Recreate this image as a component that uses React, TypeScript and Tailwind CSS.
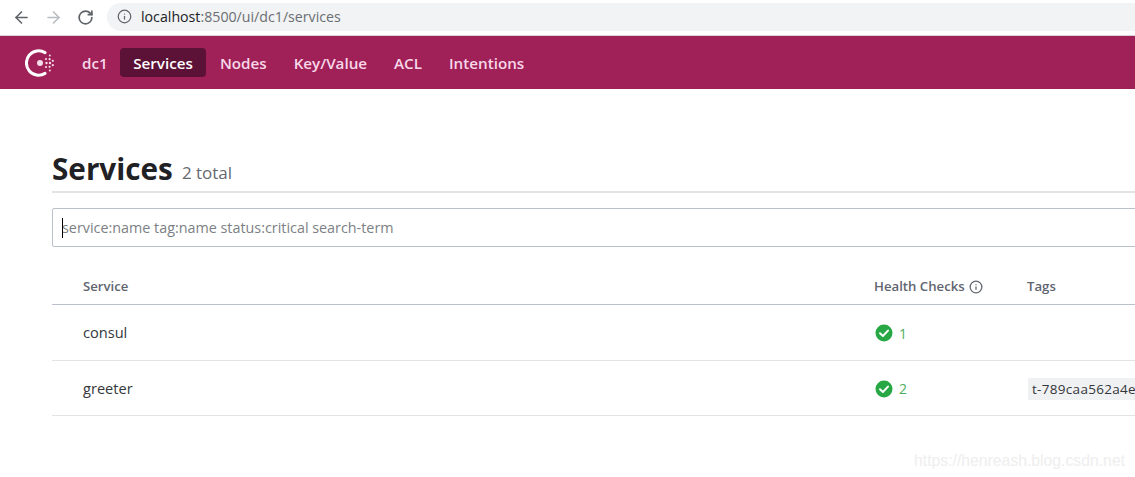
import { ArrowLeft, ArrowRight, RotateCw, Info } from 'lucide-react';

const NAV = ['Services', 'Nodes', 'Key/Value', 'ACL', 'Intentions'];

const ROWS = [
  { name: 'consul', checks: 1, tag: '' },
  { name: 'greeter', checks: 2, tag: 't-789caa562a4e2a4e2' },
];

function ConsulLogo() {
  return (
    <svg width="32" height="32" viewBox="0 0 32 32" fill="none">
      <path d="M20 5.6 A12.2 12.2 0 1 0 20 26.4" stroke="#fff" strokeWidth="3" strokeLinecap="round" />
      <circle cx="15" cy="16" r="3" fill="#f6dce8" />
      <circle cx="21.5" cy="16" r="1.2" fill="#f6dce8" />
      <circle cx="25" cy="16" r="1.2" fill="#f6dce8" />
      <circle cx="21" cy="12" r="1.1" fill="#f6dce8" />
      <circle cx="24.6" cy="12.2" r="1.1" fill="#f6dce8" />
      <circle cx="27.8" cy="13.8" r="1.1" fill="#f6dce8" />
      <circle cx="21" cy="20" r="1.1" fill="#f6dce8" />
      <circle cx="24.6" cy="19.8" r="1.1" fill="#f6dce8" />
      <circle cx="27.8" cy="18.2" r="1.1" fill="#f6dce8" />
      <circle cx="24.8" cy="8.6" r="1" fill="#f6dce8" />
      <circle cx="24.8" cy="23.4" r="1" fill="#f6dce8" />
    </svg>
  );
}

function PassIcon() {
  return (
    <svg width="18" height="18" viewBox="0 0 18 18">
      <circle cx="9" cy="9" r="8.5" fill="#28a745" />
      <path d="M5 9.3 L7.9 12 L13 6.6" stroke="#fff" strokeWidth="2" fill="none" strokeLinecap="round" strokeLinejoin="round" />
    </svg>
  );
}

export default function App() {
  return (
    <div className="relative h-[477px] w-[1135px] overflow-hidden bg-white font-['Open_Sans','Noto_Sans',sans-serif] text-[#1f2124]">
      {/* browser bar */}
      <div className="flex h-[36px] items-center border-b border-[#d9d3d6] pl-[12px]">
        <ArrowLeft size={19} strokeWidth={2} className="text-[#5f6368]" />
        <ArrowRight size={19} strokeWidth={2} className="ml-[13px] text-[#b9bcc0]" />
        <RotateCw size={17} strokeWidth={2.4} className="ml-[14px] text-[#5f6368]" />
        <div className="mb-[2px] ml-[13px] flex h-[28px] flex-1 items-center rounded-l-full bg-[#f1f3f4] pl-[10px]">
          <Info size={15} strokeWidth={2} className="text-[#5f6368]" />
          <span className="ml-[9px] text-[14.2px] text-[#6b6e72]">
            <span className="text-[#202124]">localhost</span>:8500/ui/dc1/services
          </span>
        </div>
      </div>

      {/* nav */}
      <div className="flex h-[53px] items-center bg-[#a02158] pl-[25px]">
        <ConsulLogo />
        <span className="ml-[25px] pt-[1px] text-[15.2px] font-semibold text-[#f8d8e8]">dc1</span>
        <div className="ml-[12px] flex items-center">
          {NAV.map((item, i) => (
            <span
              key={item}
              className={
                i === 0
                  ? 'rounded-[4px] bg-[#5c1137] px-[13.5px] pb-[4px] pt-[6px] text-[15.2px] font-semibold leading-[19px] text-white'
                  : 'px-[13.5px] pb-[4px] pt-[6px] text-[15.2px] font-semibold leading-[19px] text-[#f8d8e8]'
              }
            >
              {item}
            </span>
          ))}
        </div>
      </div>

      {/* content */}
      <div className="pl-[52px]">
        <div className="flex h-[104px] items-end border-b-2 border-[#e1e4e7] pb-[2px]">
          <h1 className="text-[29.7px] font-bold leading-[40px] text-[#1f2124]">Services</h1>
          <span className="mb-[3px] ml-[9px] text-[17px] leading-[26px] text-[#66696e]">2 total</span>
        </div>

        <div className="relative mt-[15px] flex h-[39px] w-[1200px] items-center rounded-[2px] border border-[#bac1cc] pl-[9px] pt-[1px] text-[14.35px] text-[#7c7f85]">
          <span className="absolute left-[9px] top-[9px] h-[20px] w-[1px] bg-black" />
          service:name tag:name status:critical search-term
        </div>

        {/* table */}
        <div className="mt-[22px] flex h-[36px] items-center border-b border-[#bac1cc] pt-[1px] text-[13.2px] font-semibold text-[#5f6570]">
          <span className="ml-[31px] w-[791px] shrink-0">Service</span>
          <span className="flex w-[153px] shrink-0 items-center">
            Health Checks
            <Info size={14} strokeWidth={2.2} className="ml-[4px]" />
          </span>
          <span>Tags</span>
        </div>
        {ROWS.map(row => (
          <div key={row.name} className="flex h-[55.5px] items-center border-b border-[#e1e4e7] pt-[2px] text-[14.6px] text-[#34373b]">
            <span className="ml-[31px] w-[791px] shrink-0">{row.name}</span>
            <span className="flex w-[153px] shrink-0 items-center text-[14px] text-[#4fae5e]">
              <span className="ml-[1px]"><PassIcon /></span>
              <span className="ml-[6px]">{row.checks}</span>
            </span>
            {row.tag && (
              <span className="ml-[1px] shrink-0 whitespace-nowrap rounded-[1px] bg-[#f0f1f3] px-[4px] py-[1px] text-[13.5px] leading-[20px] tracking-[0.3px]">{row.tag}</span>
            )}
          </div>
        ))}
      </div>

      {/* csdn watermark */}
      <span className="absolute left-[914px] top-[449px] font-['Liberation_Sans',sans-serif] text-[15.75px] text-[#eeeeee]">
        https://henreash.blog.csdn.net
      </span>
    </div>
  );
}
